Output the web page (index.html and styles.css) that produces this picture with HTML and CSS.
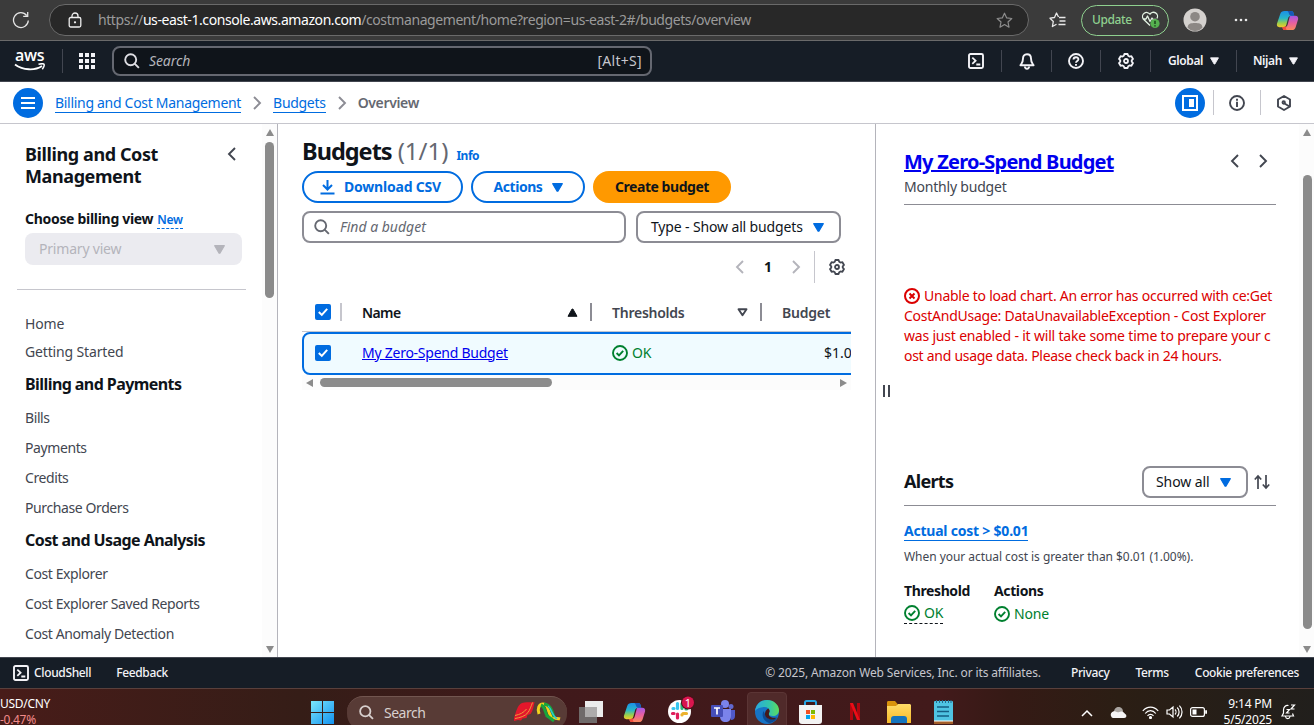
FILE: index.html
```html
<!DOCTYPE html>
<html lang="en">
<head>
<meta charset="utf-8">
<title>Budgets overview</title>
<link rel="stylesheet" href="styles.css">
</head>
<body>
<svg class="defs" width="0" height="0">
  <defs>
    <linearGradient id="cpA" x1="0" y1="0" x2="0" y2="1"><stop offset="0" stop-color="#1b8fe8"/><stop offset=".45" stop-color="#28b6c9"/><stop offset=".75" stop-color="#9ccf4a"/><stop offset="1" stop-color="#f3c92b"/></linearGradient>
    <linearGradient id="cpB" x1="0" y1="0" x2="0" y2="1"><stop offset="0" stop-color="#a457e6"/><stop offset=".5" stop-color="#e85fa0"/><stop offset="1" stop-color="#fb8a5b"/></linearGradient>
    <linearGradient id="edgeA" x1="0" y1="0" x2="1" y2="0"><stop offset="0" stop-color="#2aa8e0"/><stop offset=".6" stop-color="#33c6a8"/><stop offset="1" stop-color="#5fdc5a"/></linearGradient>
    <linearGradient id="winG" x1="0" y1="0" x2="1" y2="1"><stop offset="0" stop-color="#7be6fb"/><stop offset="1" stop-color="#1292f0"/></linearGradient>
    <linearGradient id="foldG" x1="0" y1="0" x2="0" y2="1"><stop offset="0" stop-color="#ffdc68"/><stop offset="1" stop-color="#f7b928"/></linearGradient>
    <symbol id="gear" viewBox="0 0 16 16"><path d="M6.4 1h3.2l.6 1.8 1.3.8 1.9-.4L15 6l-1.3 1.4v1.2L15 10l-1.6 2.800-1.900-.4-1.300.8-.6 1.800H6.400l-.6-1.800-1.300-.8-1.900.4L1 10l1.300-1.400V7.400L1 6l1.600-2.800 1.900.4 1.300-.8z" fill="none" stroke="currentColor" stroke-width="1.800" stroke-linejoin="round"/><circle cx="8" cy="8" r="2" fill="none" stroke="currentColor" stroke-width="1.800"/></symbol>
    <symbol id="shell" viewBox="0 0 16 16"><rect x="1" y="1" width="14" height="14" rx="1.500" fill="none" stroke="currentColor" stroke-width="1.900"/><path d="M4.300 4.600 7.600 7.700 4.300 10.800M8.300 11.500h4" fill="none" stroke="currentColor" stroke-width="1.800"/></symbol>
    <symbol id="mag" viewBox="0 0 16 16"><circle cx="6.700" cy="6.700" r="5.500" fill="none" stroke="currentColor" stroke-width="1.900"/><path d="m10.600 10.600 4.300 4.300" stroke="currentColor" stroke-width="1.900"/></symbol>
    <symbol id="ok" viewBox="0 0 16 16"><circle cx="8" cy="8" r="7" fill="none" stroke="currentColor" stroke-width="1.900"/><path d="m4.600 8 2.400 2.400 4.200-4.500" fill="none" stroke="currentColor" stroke-width="1.900"/></symbol>
    <symbol id="left" viewBox="0 0 16 16"><path d="M11 2 5 8l6 6" fill="none" stroke="currentColor" stroke-width="1.900"/></symbol>
    <symbol id="right" viewBox="0 0 16 16"><path d="m5 2 6 6-6 6" fill="none" stroke="currentColor" stroke-width="1.900"/></symbol>
    <symbol id="down" viewBox="0 0 10 8"><path d="M.6.5h8.800L5.400 7.400h-.8z" fill="currentColor" stroke="currentColor" stroke-linejoin="round"/></symbol>
    <symbol id="copilot" viewBox="0 0 24 24"><path d="M9 2h7c1.500 0 2 1 2.500 2.500L19 7h-3c-2 0-3 1-3.500 3l-1.700 6.500C10.200 18.500 9 19 7.500 19H3.500C1.500 19 .5 17.500 1 15.500L4.500 5C5.200 3 6.500 2 9 2z" fill="url(#cpA)"/><path d="M15.500 7H20c2.500 0 3.600 1.500 3 4l-2.500 8c-.7 2-2 3-4 3h-7c-1.500 0-2.400-1-3-3h2.500c1.800 0 2.700-1 3.300-3l1.700-6.500C14.300 8 14.500 7 15.500 7z" fill="url(#cpB)"/><path d="M12 2h4c1.500 0 2 1 2.500 2.500L19 7h-3.500c-1.500-.2-2-2-2.500-3.500z" fill="#1858b8"/><path d="m6.500 19 .8 2c.6.800 1.200 1 2.200 1h2c-1.200-.6-1.500-1.500-.5-4z" fill="#f24d3d"/></symbol>
  </defs>
</svg>

<header class="browser">
  <svg class="reload" width="18" height="18" viewBox="0 0 18 18" fill="none" stroke="#e4e4e4" stroke-width="1.300"><path d="M16.300 9.500A7.400 7.400 0 1 1 14.700 4.500M15.700 1v4.300h-4.500"/></svg>
  <div class="address">
    <svg width="14" height="16" viewBox="0 0 14 16" fill="none" stroke="#eee" stroke-width="1.300"><rect x="1.200" y="5.500" width="11.600" height="9.500" rx="1.500"/><path d="M4 5.500V4a3 3 0 0 1 6 0v1.500"/><circle cx="7" cy="10.300" r=".5" fill="#eee"/></svg>
    <span class="url">https://<b>us-east-1.console.aws.amazon.com</b><span class="path">/costmanagement/home?region=us-east-2#/budgets/overview</span></span>
    <svg class="star" width="17" height="17" viewBox="0 0 17 17" fill="none" stroke="#8d8d8d" stroke-width="1.200" stroke-linejoin="round"><path d="m8.500 1.200 2.200 4.700 5.100.6-3.800 3.500 1 5.200-4.500-2.600-4.500 2.600 1-5.200L1.200 6.500l5.100-.6z"/></svg>
  </div>
  <svg class="favs" width="17" height="16" viewBox="0 0 17 16" fill="none" stroke="#e8e8e8" stroke-width="1.300" stroke-linejoin="round"><path d="M9.500 5 7.500 1 5.500 5.500l-4.500.7L4.300 9.500l-.9 5 4.100-2.300M10 5.500h6.500M10.500 9h6M9.500 12.500h7"/></svg>
  <div class="update"><span>Update</span>
    <svg width="19" height="18" viewBox="0 0 19 18" fill="none" stroke="#e4f3e4" stroke-width="1.300" stroke-linejoin="round"><path d="M9 14.500 2.300 8A4 4 0 0 1 9 3.200 4 4 0 0 1 15.900 7.500M2 8h3l1.500-3L9 10.500 11 7l1 1.500h3"/><circle cx="14" cy="12.500" r="4.600" fill="#55b14f" stroke="none"/><path d="M14 9.800v3.200m0 1.200v1.200" stroke="#193c19" stroke-width="1.400"/></svg>
  </div>
  <svg class="avatar" width="24" height="24" viewBox="0 0 24 24"><circle cx="12" cy="12" r="11.500" fill="#d4d1ce"/><circle cx="12" cy="8.700" r="4.800" fill="#8c8885"/><path d="M4.500 19.500C5 15.500 8 15 12 15s7 .5 7.500 4.500C17.500 22 15 23 12 23s-5.500-1-7.500-3.500z" fill="#8c8885"/></svg>
  <svg class="dots" width="14" height="4" viewBox="0 0 14 4" fill="#e8e8e8"><circle cx="2" cy="2" r="1.300"/><circle cx="7" cy="2" r="1.300"/><circle cx="12" cy="2" r="1.300"/></svg>
  <svg class="cop" width="23" height="23"><use href="#copilot"/></svg>
</header>

<nav class="awsnav">
  <div class="logo"><span>aws</span><svg width="32" height="9" viewBox="0 0 32 9" fill="none" stroke="#fff" stroke-width="1.900"><path d="M1 1.500c8 6 20 6.300 27 1.500"/><path d="M24.500 1.200c3-.7 5-.6 5.500.1.400.8-.2 3-1.700 5" stroke-width="1.500"/></svg></div>
  <i class="vr"></i>
  <svg class="grid9" width="16" height="16" viewBox="0 0 16 16" fill="#f3f3f7"><path d="M0 0h4v4H0zM6 0h4v4H6zM12 0h4v4h-4zM0 6h4v4H0zM6 6h4v4H6zM12 6h4v4h-4zM0 12h4v4H0zM6 12h4v4H6zM12 12h4v4h-4z"/></svg>
  <div class="search"><svg width="16" height="16"><use href="#mag"/></svg><em>Search</em><span>[Alt+S]</span></div>
  <div class="tools">
    <div class="cell"><svg width="16" height="16"><use href="#shell"/></svg></div>
    <div class="cell"><svg width="16" height="17" viewBox="0 0 16 17" fill="none" stroke="currentColor" stroke-width="1.900" stroke-linejoin="round"><path d="M8 1.200C5 1.200 4 3.500 4 5.500c0 4-1.200 4.500-2.600 6.800h13.200C13.200 10 12 9.500 12 5.500c0-2-1-4.300-4-4.300z"/><path d="M5.800 13.500c.3 3 4.100 3 4.400 0"/></svg></div>
    <div class="cell"><svg width="16" height="16" viewBox="0 0 16 16" fill="none" stroke="currentColor" stroke-width="1.900"><circle cx="8" cy="8" r="7"/><path d="M5.500 6.600C5.500 3.400 10.400 3.500 10.400 6.300 10.400 8 8 7.900 8 9.800M8 10.900v1.900"/></svg></div>
    <div class="cell"><svg width="16" height="16"><use href="#gear"/></svg></div>
    <div class="cell global"><span>Global</span><svg width="9" height="8"><use href="#down"/></svg></div>
    <div class="cell user"><span>Nijah</span><svg width="9" height="8"><use href="#down"/></svg></div>
  </div>
</nav>

<div class="crumbs">
  <div class="burger"><svg width="14" height="12" viewBox="0 0 14 12" fill="#fff"><path d="M0 0h14v2H0zM0 5h14v2H0zM0 10h14v2H0z"/></svg></div>
  <a class="c1">Billing and Cost Management</a>
  <svg width="16" height="16"><use href="#right"/></svg>
  <a class="c2">Budgets</a>
  <svg width="16" height="16"><use href="#right"/></svg>
  <b class="c3">Overview</b>
  <div class="crumb-tools">
    <div class="round"><svg width="16" height="16" viewBox="0 0 16 16"><rect x="1" y="1" width="14" height="14" fill="none" stroke="#fff" stroke-width="2"/><path d="M7 4h5v8H7z" fill="#fff"/></svg></div>
    <i></i>
    <svg width="16" height="16" viewBox="0 0 16 16" fill="none" stroke="#424650" stroke-width="1.900"><circle cx="8" cy="8" r="7"/><path d="M8 6.700V12M8 3.800v1.900"/></svg>
    <i></i>
    <svg width="16" height="16" viewBox="0 0 16 16" fill="none" stroke="#424650" stroke-width="1.900"><path d="m8 1 6 3.500v7L8 15l-6-3.500v-7z" stroke-linejoin="round"/><circle cx="7.700" cy="7.500" r="1.200"/><path d="m8.500 8.500 5 3"/></svg>
  </div>
</div>

<main class="body">
  <aside class="side">
    <div class="side-content">
      <div class="side-title"><h2>Billing and Cost<br>Management</h2><svg width="16" height="16"><use href="#left"/></svg></div>
      <div class="view-label"><b>Choose billing view</b><span>New</span></div>
      <div class="view-select"><span>Primary view</span><svg width="11" height="9"><use href="#down"/></svg></div>
      <hr>
      <ul class="home"><li>Home</li><li>Getting Started</li></ul>
      <h3>Billing and Payments</h3>
      <ul><li>Bills</li><li>Payments</li><li>Credits</li><li>Purchase Orders</li></ul>
      <h3>Cost and Usage Analysis</h3>
      <ul><li>Cost Explorer</li><li>Cost Explorer Saved Reports</li><li>Cost Anomaly Detection</li></ul>
    </div>
    <div class="vbar"><i class="up"></i><b class="thumb-side"></b><i class="dn"></i></div>
  </aside>

  <section class="budgets">
    <div class="heading"><h1>Budgets</h1><span class="count">(1/1)</span><b>Info</b></div>
    <div class="actions">
      <button class="btn dl"><svg width="15" height="16" viewBox="0 0 15 16" fill="none" stroke="currentColor" stroke-width="2"><path d="M7.500 1v9M3 6l4.500 4.500L12 6M.5 14.500h14"/></svg><span>Download CSV</span></button>
      <button class="btn ac"><span>Actions</span><svg width="11" height="9"><use href="#down"/></svg></button>
      <button class="btn cr"><span>Create budget</span></button>
    </div>
    <div class="filters">
      <div class="find"><svg width="16" height="16"><use href="#mag"/></svg><em>Find a budget</em></div>
      <div class="select type"><span>Type - Show all budgets</span><svg width="11" height="9"><use href="#down"/></svg></div>
    </div>
    <div class="pager"><svg width="16" height="16"><use href="#left"/></svg><b>1</b><svg width="16" height="16"><use href="#right"/></svg><i></i><svg class="cog" width="16" height="16"><use href="#gear"/></svg></div>
    <div class="table">
      <div class="row head">
        <div class="c chk"><span class="box"><svg width="16" height="16" viewBox="0 0 16 16"><path d="m3.800 8 3 2.900 5.400-6" fill="none" stroke="#fff" stroke-width="2"/></svg></span></div>
        <div class="c name"><b>Name</b><svg width="11" height="9" viewBox="0 0 11 9"><path d="M1 8.300h9L5.900 1h-.8z" fill="#0f141a" stroke="#0f141a" stroke-linejoin="round"/></svg></div>
        <div class="c thr"><b>Thresholds</b><svg width="11" height="9" viewBox="0 0 11 9"><path d="M1.500 1.200h8l-4 6z" fill="none" stroke="#424650" stroke-width="1.900" stroke-linejoin="round"/></svg></div>
        <div class="c bud"><b>Budget</b></div>
      </div>
      <div class="row item">
        <div class="c chk"><span class="box"><svg width="16" height="16" viewBox="0 0 16 16"><path d="m3.800 8 3 2.900 5.400-6" fill="none" stroke="#fff" stroke-width="2"/></svg></span></div>
        <div class="c name"><a>My Zero-Spend Budget</a></div>
        <div class="c thr"><span class="good"><svg width="16" height="16"><use href="#ok"/></svg>OK</span></div>
        <div class="c bud"><span>$1.00</span></div>
      </div>
      <div class="hbar"><i class="lt"></i><b></b><i class="rt"></i></div>
    </div>
  </section>

  <section class="panel">
    <div class="handle"></div>
    <div class="detail">
      <div class="detail-head"><h2><a>My Zero-Spend Budget</a></h2><svg width="16" height="16"><use href="#left"/></svg><svg width="16" height="16"><use href="#right"/></svg></div>
      <p class="sub">Monthly budget</p>
      <div class="rule"></div>
      <p class="error"><span><svg width="16" height="16" viewBox="0 0 16 16" fill="none" stroke="currentColor" stroke-width="2"><circle cx="8" cy="8" r="7"/><path d="m5.500 5.500 5 5m0-5-5 5"/></svg>Unable to load chart. An error has occurred with ce:Get</span><br><span class="l2">CostAndUsage: DataUnavailableException - Cost Explorer</span><br><span class="l3">was just enabled - it will take some time to prepare your c</span><br><span class="l4">ost and usage data. Please check back in 24 hours.</span></p>
      <div class="alerts"><h3>Alerts</h3><div class="select show"><span>Show all</span><svg width="11" height="9"><use href="#down"/></svg></div><svg width="16" height="16" viewBox="0 0 16 16" fill="none" stroke="#424650" stroke-width="1.700"><path d="M4 15V2.500M.8 5.500 4 2l3.200 3.500M12 1v12.500M8.800 10.500 12 14l3.200-3.500"/></svg></div>
      <div class="rule"></div>
      <a class="cost">Actual cost &gt; $0.01</a>
      <p class="when">When your actual cost is greater than $0.01 (1.00%).</p>
      <div class="states">
        <div><b class="th">Threshold</b><span class="good dashed"><svg width="16" height="16"><use href="#ok"/></svg>OK</span></div>
        <div><b>Actions</b><span class="good"><svg width="16" height="16"><use href="#ok"/></svg>None</span></div>
      </div>
    </div>
    <div class="vbar"><i class="up"></i><b class="thumb-panel"></b><i class="dn"></i></div>
  </section>
</main>

<footer class="foot">
  <svg width="16" height="16"><use href="#shell"/></svg><b class="f1">CloudShell</b><b class="f2">Feedback</b>
  <span class="copy">© 2025, Amazon Web Services, Inc. or its affiliates.</span><b class="f3">Privacy</b><b class="f4">Terms</b><b class="f5">Cookie preferences</b>
</footer>

<div class="taskbar">
  <div class="ticker"><span>USD/CNY</span><span class="loss">-0.47%</span></div>
  <svg class="win" width="23" height="23" viewBox="0 0 23 23" fill="url(#winG)"><path d="M0 0h11v11H0zM12 0h11v11H12zM0 12h11v11H0zM12 12h11v11H12z"/></svg>
  <div class="tsearch"><svg width="15" height="15"><use href="#mag"/></svg><span>Search</span>
    <svg class="art" width="48" height="22" viewBox="0 0 48 22"><path d="M1 17C3 12 4 4 9 2c4-1.500 8 0 12.500-1-1 5-1.500 9-4 12l-3 1-1 3-4 .5-1.500 2-3-.5L1 20z" fill="#e3172b"/><path d="M2 17.500c5-1 10-2 13-6 2-3 3-6 4.500-10M2 14.500c5-1 9-3 11.500-6.500" stroke="#ef9a3c" fill="none"/><path d="M26 13c-2-5 0-10 4-10 6 0 4 7 8 12 2 3 6 2 9 3" stroke="#f2d21c" stroke-width="3" fill="none"/><path d="M28 4c5 2 3 8 7 12M31 3c7 1 8 7 10 13M33 14l8 6" stroke="#17a53b" stroke-width="3" fill="none"/><path d="M35 5c4 3 3 9 9 13" stroke="#2cc7d2" stroke-width="1.500" fill="none"/></svg>
  </div>
  <svg class="tv" width="24" height="23" viewBox="0 0 24 23"><path d="M6 0h18v16H6z" fill="#ececec"/><path d="M0 6h18v16H0z" fill="#6f6a6a"/><path d="M6 6h12v10H6z" fill="#adabab"/></svg>
  <svg class="tcop" width="23" height="23"><use href="#copilot"/></svg>
  <svg class="slack" width="27" height="28" viewBox="0 0 27 28"><circle cx="11.500" cy="16.500" r="11.500" fill="#fff"/><g stroke-width="3.200" stroke-linecap="round"><path d="M9.500 8.500v5M5 13.500h1" stroke="#36c5f0"/><path d="M14 8.500v5M18 14h.5" stroke="#2eb67d"/><path d="M14 19.500v.5M15 18.500h3.500" stroke="#ecb22e"/><path d="M9.500 19v4M4.500 18.500H6" stroke="#e01e5a"/></g><circle cx="20" cy="7.500" r="7" fill="#4a1119"/><circle cx="20" cy="7.500" r="6" fill="#d9164e"/><text x="20" y="11.500" text-anchor="middle" class="badge">1</text></svg>
  <svg class="teams" width="24" height="23" viewBox="0 0 24 23"><circle cx="20" cy="6.500" r="2.500" fill="#6168cf"/><circle cx="14" cy="4" r="4" fill="#7b83eb"/><path d="M9 9h11v7c0 4-2 6-5.500 6S9 20 9 16z" fill="#7b83eb"/><path d="M20 10h4v6c0 2.500-1.500 4-4 4z" fill="#5059c9"/><rect y="5" width="12" height="12" rx="1" fill="#464eb8"/><path d="M3 8h6M6 8v6.500" stroke="#fff" stroke-width="1.700"/></svg>
  <div class="edge"><svg width="24" height="24" viewBox="0 0 24 24"><circle cx="12" cy="12" r="12" fill="#1673c5"/><path d="M0 11C1 4 6 0 12 0c7 0 12 5 12 10 0 4-3 6-6 6-4 0-5-1.500-4-3 1.500-3-.5-6-4.500-6C5 7 1.500 9 0 11z" fill="url(#edgeA)"/><path d="M8.500 11C6 16 9 22 15 23c3-.5 6-2.500 7-5-5 2.500-11 1-12-4z" fill="#0c4a93"/><path d="M14 13c1-1.500.8-3-.5-4.500 0 0-3 1-3.500 5s4 6.500 9 6l3-2c-4.500 1-9-.5-8-4.500z" fill="#45191b"/></svg></div>
  <svg class="store" width="23" height="24" viewBox="0 0 23 24"><path d="M6 7V2.500C6 1.500 6.500 1 7.500 1h8c1 0 1.500.5 1.500 1.500V7" fill="none" stroke="#27a5e3" stroke-width="2"/><path d="M0 5h23v16c0 2-1 3-3 3H3c-2 0-3-1-3-3z" fill="#f3f3f3"/><path d="M7 10h4v4H7z" fill="#f25022"/><path d="M12 10h4v4h-4z" fill="#7fba00"/><path d="M7 15h4v4H7z" fill="#00a4ef"/><path d="M12 15h4v4h-4z" fill="#ffb900"/></svg>
  <svg class="netflix" width="10" height="17" viewBox="0 0 10 17"><path d="M0 0h3v17H0zM7 0h3v17H7z" fill="#b1060f"/><path d="M0 0h3l7 17H7z" fill="#ed0d17"/></svg>
  <svg class="folder" width="24" height="22" viewBox="0 0 24 22"><path d="M0 1.500C0 .5.500 0 1.500 0H8l2.500 3v4H0z" fill="#d9930c"/><path d="M0 5h9l2-2h12l1 1v18H0z" fill="url(#foldG)"/><path d="M4 22v-4c0-2 1-3 3-3h10c2 0 3 1 3 3v4z" fill="#1474be"/></svg>
  <svg class="notes" width="19" height="24" viewBox="0 0 19 24"><rect y="1" width="19" height="21" rx="1" fill="#4fc3e2"/><path d="M0 21h19v3H0z" fill="#a35e29"/><path d="M0 21h19" stroke="#fff"/><path d="M2.500 0v3M5.500 0v3M8.500 0v3M11.500 0v3M14.500 0v3M17 0v3" stroke="#226b91"/><path d="M3 7h12M3 11.500h12M3 16h12" stroke="#155d83" stroke-width="1.600"/></svg>
  <div class="tray">
    <svg class="t1" width="12" height="8" viewBox="0 0 12 8" fill="none" stroke="#fff" stroke-width="1.500"><path d="m1 7 5-5 5 5"/></svg>
    <svg class="t2" width="17" height="12" viewBox="0 0 17 12"><path d="M4 6C4 2 7 .5 9.500 1 12 1.500 13 3.500 13 6l-3 4H4z" fill="#aaa6a2"/><path d="M1 10C0 7 3 4.500 5.500 5.500 8 7 9 6 11 5.500c3 0 3.500 2.500 5 3 1 2 0 3.500-2 3.500H3c-1 0-1.500-1-2-2z" fill="#f5f5f5"/></svg>
    <svg class="t3" width="17" height="13" viewBox="0 0 17 13" fill="none" stroke="#fff" stroke-width="1.200"><path d="M.8 5c4.200-5.300 11.200-5.300 15.400 0M3.200 7.500c2.900-3.800 7.700-3.800 10.600 0M5.500 9.800c1.600-2 4.400-2 6 0"/><circle cx="8.500" cy="11.500" r="1" fill="#fff"/></svg>
    <svg class="t4" width="17" height="14" viewBox="0 0 17 14" fill="none" stroke="#fff" stroke-width="1.200"><path d="M1 5v4h2.500L7 12V2L3.500 5zM9 4.500c1.300 1.300 1.300 3.700 0 5M11.200 2.500c2.500 2.500 2.500 6.500 0 9M13.400.7c3.500 3.500 3.500 9 0 12.600"/></svg>
    <svg class="t5" width="17" height="10" viewBox="0 0 17 10"><rect x=".6" y=".6" width="13.800" height="8.800" rx="2" fill="none" stroke="#fff" stroke-width="1.200"/><path d="M2.500 2.500h4v5h-4zM15.200 3.300H17v3.400h-1.800z" fill="#fff"/></svg>
    <div class="clock"><span>9:14 PM</span><span>5/5/2025</span></div>
    <svg class="t6" width="15" height="16" viewBox="0 0 15 16" fill="none" stroke="#fff" stroke-width="1.200"><path d="M7.500 1.500C4.500 1 2.500 3 2.500 6v3L1 12h11.500l-1-2.500M4.500 12.500c.5 2.700 4 2.700 4.500 0M5.500 5.500h3L5.500 9h3M10 1h3.500L10 5h3.500"/></svg>
  </div>
</div>
</body>
</html>
```

FILE: styles.css
```css
* { box-sizing: border-box; margin: 0; padding: 0; }
body {
  width: 1314px; height: 725px; overflow: hidden; background: #fff; color: #0f141a;
  display: flex; flex-direction: column;
  font: 14px/20px "Noto Sans", "Open Sans", sans-serif;
}
.defs { position: absolute; }
svg { display: block; flex: none; }
ul { list-style: none; }
span, b, a, em { white-space: nowrap; }

/* Browser toolbar */
.browser { height: 41px; flex: none; background: #3b3b3b; border-bottom: 1px solid #6a6a6a; display: flex; align-items: center; padding-left: 12px; }
.address { width: 980px; height: 32px; margin-left: 19px; border: 1px solid #6a6a6a; border-radius: 16px; background: #282828; display: flex; align-items: center; padding: 0 15px 0 18px; }
.url { margin-left: 16px; color: #9a9a9a; letter-spacing: -.42px; }
.url b { color: #fff; font-weight: 400; }
.star { margin-left: auto; }
.favs { margin-left: 20px; }
.update { width: 88px; height: 31px; margin-left: 15px; border: 1px solid #8fd08f; border-radius: 16px; display: flex; align-items: center; padding-left: 10px; gap: 9px; color: #8fd08f; font-size: 12px; font-weight: 500; letter-spacing: -.4px; }
.update span { width: 40px; }
.avatar { margin-left: 14px; }
.dots { margin-left: 27px; }
.cop { margin-left: 28px; }

/* Service navigation */
.awsnav { height: 41px; flex: none; background: #161d26; border-bottom: 1px solid #424650; display: flex; align-items: center; color: #f3f3f7; }
.logo { width: 32px; margin-left: 14px; height: 22px; display: flex; flex-direction: column; color: #fff; }
.logo span { font: 600 16px/11px "Open Sans", sans-serif; height: 13px; padding-left: 1px; letter-spacing: -.3px; }
.vr { width: 1px; height: 24px; background: #424650; margin: 0 16px; }
.search { width: 540px; height: 30px; margin-left: 17px; border: 2px solid #656871; border-radius: 8px; background: #0f141a; display: flex; align-items: center; padding: 0 8px 0 10px; color: #b4b4bb; }
.search svg { color: #dedee3; }
.search em { margin-left: 9px; letter-spacing: -.1px; }
.search span { margin-left: auto; font-size: 14px; letter-spacing: .3px; color: #c6c6cd; }
.tools { margin-left: auto; display: flex; align-items: center; }
.cell { width: 49.600px; height: 22px; display: flex; align-items: center; justify-content: center; border-left: 1px solid #424650; }
.cell:first-child { border: 0; }
.cell span { font-size: 12px; font-weight: 600; letter-spacing: -.4px; }
.global { width: 86px; gap: 7px; }
.user { width: 78px; gap: 7px; }

/* Breadcrumbs */
.crumbs { height: 42px; flex: none; border-bottom: 1px solid #c6c6cd; display: flex; align-items: center; padding: 0 22px 0 13px; color: #8c8c94; }
.burger, .round { width: 30px; height: 30px; border-radius: 50%; background: #006ce0; display: flex; align-items: center; justify-content: center; }
.crumbs a { color: #006ce0; border-bottom: 1px solid #006ce0; line-height: 18px; letter-spacing: -.3px; margin-top: 1px; }
.crumbs > svg { margin: 0 8px; }
.crumbs .c1 { margin-left: 12px; }
.crumbs .c3 { color: #656871; font-weight: 600; letter-spacing: -.35px; margin-top: 1px; }
.crumb-tools { margin-left: auto; display: flex; align-items: center; }
.crumb-tools i { width: 1px; height: 25px; background: #c6c6cd; }
.crumb-tools i + svg { margin-left: 15px; }
.crumb-tools .round + i { margin-left: 8px; }
.crumb-tools svg + i { margin-left: 15px; }

.body { height: 533px; flex: none; display: flex; }

/* Scrollbars */
.vbar { width: 15px; flex: none; background: #fcfcfc; display: flex; flex-direction: column; align-items: center; padding: 5px 0 4px; }
.vbar i { border: 4.500px solid transparent; width: 0; height: 0; }
.vbar .up { border-bottom: 7px solid #8b8b8b; border-top: 0; }
.vbar .dn { border-top: 7px solid #8b8b8b; border-bottom: 0; margin-top: auto; }
.vbar b { width: 9px; border-radius: 5px; background: #8b8b8b; }
.thumb-side { height: 156px; margin-top: 6px; }
.thumb-panel { height: 454px; margin-top: 39px; }

/* Side navigation */
.side { width: 278px; flex: none; border-right: 1px solid #b4b4bb; display: flex; }
.side-content { width: 262px; padding: 19px 0 0 25px; color: #424650; }
.side-title { display: flex; }
h2 { font-size: 18px; line-height: 22px; font-weight: 700; color: #0f141a; }
.side-title h2 { width: 199px; letter-spacing: -.4px; }
.side-title svg { margin-top: 3px; }
.view-label { margin-top: 22px; height: 20px; display: flex; gap: 4px; color: #0f141a; }
.view-label b { letter-spacing: -.3px; }
.view-label span { color: #006ce0; font-size: 12px; font-weight: 600; letter-spacing: -.3px; line-height: 21px; border-bottom: 1px dashed #006ce0; height: 20px; }
.view-select { width: 217px; height: 32px; margin-top: 4px; border-radius: 8px; background: #ebebf0; color: #b4b4bb; letter-spacing: -.2px; display: flex; align-items: center; justify-content: space-between; padding: 0 17px 0 14px; }
.side hr { border: 0; border-top: 1px solid #c6c6cd; margin: 24px 16px 24px -8px; }
.home { display: flex; flex-direction: column; gap: 8px; }
.side li { letter-spacing: -.4px; }
.side .home li { letter-spacing: -.15px; }
.side h3 { font-size: 16px; line-height: 20px; margin: 12px 0 14px; color: #0f141a; letter-spacing: -.57px; }
.side h3 + ul { display: flex; flex-direction: column; gap: 10px; }
.side h3 + ul li { height: 20px; }

/* Budgets list */
.budgets { width: 598px; flex: none; padding: 12px 24px 0 24px; border-right: 1px solid #b4b4bb; }
.heading { height: 30px; display: flex; align-items: baseline; line-height: 30px; }
h1 { font-size: 23.500px; letter-spacing: -1px; }
.count { font-size: 24px; color: #656871; margin-left: 6px; }
.heading b { color: #006ce0; font-size: 12px; letter-spacing: -.5px; margin-left: 8px; }
.actions { display: flex; gap: 8px; margin-top: 5px; }
.btn { height: 32px; border: 2px solid #006ce0; border-radius: 16px; background: #fff; color: #006ce0; font: 700 14px/20px "Noto Sans", sans-serif; display: flex; align-items: center; justify-content: center; }
.dl { width: 161px; gap: 9px; padding-right: 4px; }
.ac { width: 114px; gap: 10px; padding-left: 1px; }
.cr { width: 138px; border-color: #ff9900; background: #ff9900; color: #0f141a; }
.btn span { letter-spacing: -.2px; }
.ac span, .cr span { letter-spacing: -.45px; }
.filters { display: flex; gap: 10px; margin-top: 8px; }
.find, .select { height: 32px; border: 2px solid #8c8c94; border-radius: 8px; display: flex; align-items: center; }
.find { width: 324px; padding-left: 10px; color: #656871; }
.find em { margin-left: 10px; }
.select { justify-content: space-between; color: #0f141a; }
.select svg { color: #006ce0; }
.type { width: 205px; padding: 0 15px 0 13px; letter-spacing: -.14px; }
.pager { height: 32px; margin: 8px 6px 0 0; display: flex; align-items: center; justify-content: flex-end; color: #b4b4bb; }
.pager b { width: 40px; text-align: center; color: #0f141a; }
.pager i { width: 1px; height: 32px; background: #c6c6cd; margin: 0 14px 0 10px; }
.cog { color: #424650; }
.table { margin-top: 10px; overflow: hidden; width: 549px; }
.row { width: 640px; display: flex; }
.c { display: flex; align-items: center; }
.chk { width: 40px; }
.name { width: 250px; }
.thr { width: 170px; }
.head { height: 39px; border-bottom: 1px solid #c6c6cd; color: #424650; }
.head .c { height: 38px; position: relative; justify-content: space-between; padding: 1px 14px 0 20px; }
.head .c::after { content: ""; position: absolute; right: 0; top: 10px; width: 2px; height: 18px; background: #8c8c94; }
.head .chk::after { background: #c6c6cd; right: 0; }
.head .chk { padding: 0 0 0 13px; }
.head .bud::after { display: none; }
.head .name b { color: #0f141a; letter-spacing: -.6px; }
.head b { font-weight: 600; letter-spacing: -.25px; }
.box { width: 16px; height: 16px; border-radius: 2px; background: #006ce0; }
.item { height: 43px; border: 2px solid #006ce0; border-radius: 8px; background: #f0fbff; }
.item .c { padding: 0 0 1px 20px; height: 38px; }
.item .chk { padding-left: 11px; width: 38px; }
.item a, h2 a { color: #0000ee; text-decoration: underline; }
.item a { letter-spacing: -.25px; }
.item .bud { padding-left: 62px; }
.good { color: #00802f; display: flex; align-items: center; gap: 4px; letter-spacing: -.2px; }
.hbar { height: 15px; background: #fcfcfc; display: flex; align-items: center; padding: 0 4px; }
.hbar i { border: 4.500px solid transparent; }
.hbar .lt { border-right: 7px solid #8b8b8b; border-left: 0; }
.hbar .rt { border-left: 7px solid #8b8b8b; border-right: 0; margin-left: auto; }
.hbar b { width: 232px; height: 9px; border-radius: 5px; background: #8b8b8b; margin-left: 7px; }

/* Split panel */
.panel { width: 438px; display: flex; }
.handle { width: 7px; height: 12px; flex: none; margin: 261px 0 0 7px; border: solid #424650; border-width: 0 2px; }
.detail { width: 372px; flex: none; margin-left: 14px; padding-top: 27px; }
.panel > .vbar { margin-left: auto; padding-left: 1px; }
.detail-head { display: flex; height: 22px; }
.detail-head h2 { flex: 1; font-size: 20px; letter-spacing: -.77px; }
.detail-head svg { margin: 2px 5px 0 8px; color: #424650; }
.detail-head h2 + svg { margin-right: 4px; }
.sub { margin-top: 4px; color: #424650; letter-spacing: -.2px; }
.rule { height: 1px; background: #8c8c94; }
.sub + .rule { margin-top: 7px; }
.error { margin-top: 81px; color: #db0000; letter-spacing: -.25px; }
.error .l3 { letter-spacing: -.19px; }
.error .l4 { letter-spacing: -.28px; }
.error svg { display: inline-block; vertical-align: -3px; margin-right: 4px; }
.alerts { margin-top: 100px; height: 32px; display: flex; align-items: center; }
.alerts h3 { flex: 1; font-size: 18px; letter-spacing: -.7px; padding-bottom: 2px; }
.show { width: 106px; padding: 0 15px 0 12px; letter-spacing: -.1px; }
.alerts > svg { margin: 0 6px; }
.alerts + .rule { margin-top: 7px; }
.cost { display: inline-block; margin-top: 15px; height: 20px; line-height: 19px; color: #006ce0; font-weight: 700; border-bottom: 1px solid #006ce0; letter-spacing: -.22px; }
.when { margin-top: 6px; font-size: 12px; color: #424650; letter-spacing: -.05px; }
.states { margin-top: 14px; display: flex; }
.states div { width: 90px; display: flex; flex-direction: column; align-items: flex-start; }
.states b { letter-spacing: -.38px; }
.states .good { height: 21px; margin-top: 2px; line-height: 20px; }
.dashed { border-bottom: 1px dashed #0f141a; }

/* Footer */
.foot { height: 31px; flex: none; background: #161d26; border-top: 1px solid #424650; color: #f3f3f7; display: flex; align-items: center; padding: 0 15px 0 13px; font-size: 12px; }
.foot b { font-weight: 500; letter-spacing: -.35px; }
.f1 { margin-left: 5px; }
.f2 { margin-left: 25px; }
.copy { margin-left: auto; color: #c6c6cd; letter-spacing: -.13px; }
.f3 { margin-left: 30px; }
.f4, .f5 { margin-left: 26px; }

/* Desktop taskbar */
.taskbar { height: 37px; flex: none; position: relative; overflow: hidden; border-top: 1px solid #59403c; background: linear-gradient(90deg, #481c19, #351d17 300px, #40191b 540px, #421a1b 940px, #351a15 1010px, #2b1e14 1120px, #211f1c); color: #fff; font: 12px/16px "Noto Sans", sans-serif; display: flex; align-items: flex-start; }
.ticker { width: 309px; display: flex; flex-direction: column; padding-top: 7px; letter-spacing: -.3px; }
.loss { color: #f28b8b; }
.win { margin: 12px 0 0 2px; }
.tsearch { width: 220px; height: 34px; margin: 7px 0 0 13px; border-radius: 16px; background: #583b36; border-top: 1px solid #725650; display: flex; align-items: flex-start; padding: 8px 0 0 12px; font-size: 14px; line-height: 15px; color: #d8d0ce; }
.tsearch span { margin-left: 10px; letter-spacing: -.5px; }
.art { margin: -4px 6px 0 auto; }
.tv { margin: 12px 0 0 12px; }
.tcop { margin: 12px 0 0 20px; }
.slack { margin: 6px 0 0 22px; }
.badge { font: 11px "Noto Sans", sans-serif; fill: #fff; }
.teams { margin: 11px 0 0 16px; }
.edge { width: 40px; height: 40px; margin: 3px 0 0 12px; border-radius: 4px; background: #502a2a; border: 1px solid #5b3535; padding: 7px; }
.store { margin: 11px 0 0 12px; }
.netflix { margin: 14px 0 0 28px; }
.folder { margin: 12px 0 0 27px; }
.notes { margin: 11px 0 0 23px; }
.tray { margin-left: auto; width: 233px; display: flex; align-items: flex-start; }
.t1 { margin-top: 20px; }
.t2 { margin: 17px 0 0 17px; }
.t3 { margin: 17px 0 0 15px; }
.t4 { margin: 16px 0 0 7px; }
.t5 { margin: 18px 0 0 7px; }
.clock { width: 65px; text-align: right; display: flex; flex-direction: column; margin-top: 7px; letter-spacing: -.2px; }
.t6 { margin: 15px 0 0 9px; }
```
